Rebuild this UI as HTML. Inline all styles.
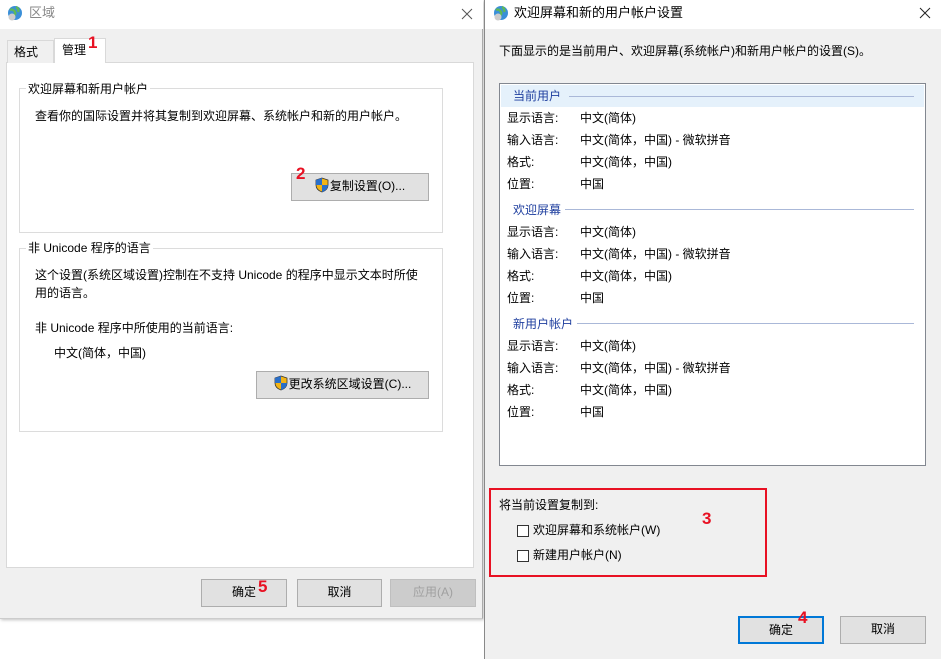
<!DOCTYPE html>
<html><head><meta charset="utf-8"><style>
*{margin:0;padding:0;box-sizing:border-box}
body{width:941px;height:659px;position:relative;overflow:hidden;background:#fff;font-family:"Liberation Sans","Noto Sans CJK SC",sans-serif;font-size:12px;color:#000}
.a{position:absolute;white-space:nowrap;line-height:14px}
.box{position:absolute}
.btn{position:absolute;background:#e1e1e1;border:1px solid #adadad;text-align:center;line-height:25px;font-size:12px}
.red{position:absolute;color:#e81123;font-weight:bold;font-size:17px;line-height:17px;font-family:"Liberation Sans",sans-serif}
.hdr{color:#1f3f9f}
.line{position:absolute;height:1px;background:#aab8d8}
.cb{position:absolute;width:12px;height:12px;border:1px solid #333;background:#fff}
.shield{display:inline-block;vertical-align:-3px;margin-right:1px}
</style></head><body>
<!-- left dialog -->
<div class="box" style="left:0;top:0;width:483px;height:619px;background:#f0f0f0;border-right:1px solid #aaa;border-bottom:1px solid #ccc;box-shadow:1px 1px 3px rgba(0,0,0,.25)"></div>
<div class="box" style="left:0;top:0;width:483px;height:29px;background:#fff"></div>
<svg class="box" style="left:7px;top:5px" width="16" height="16" viewBox="0 0 16 16"><circle cx="8" cy="8" r="7" fill="#3a8fd8"/><path d="M3 5c2-1 4 0 5 2s-1 4-3 4M9 2c2 1 3 3 2 5" stroke="#5db85a" stroke-width="2.5" fill="none"/><circle cx="5" cy="12" r="3.5" fill="#ccc"/></svg>
<div class="a" style="left:29px;top:6px;color:#888;font-size:13px">区域</div>
<svg class="box" style="left:461px;top:8px" width="12" height="12"><path d="M1 1L11 11M11 1L1 11" stroke="#555" stroke-width="1"/></svg>
<div class="box" style="left:6px;top:62px;width:468px;height:506px;background:#fff;border:1px solid #d9d9d9"></div>
<div class="box" style="left:7px;top:40px;width:47px;height:23px;background:#f0f0f0;border:1px solid #d9d9d9;border-bottom:none"></div>
<div class="a" style="left:14px;top:45px">格式</div>
<div class="box" style="left:54px;top:38px;width:52px;height:25px;background:#fff;border:1px solid #d9d9d9;border-bottom:none"></div>
<div class="a" style="left:62px;top:43px">管理</div>
<div class="red" style="left:88px;top:34px">1</div>
<div class="box" style="left:19px;top:88px;width:424px;height:145px;border:1px solid #dcdcdc"></div>
<div class="a" style="left:26px;top:82px;background:#fff;padding:0 2px">欢迎屏幕和新用户帐户</div>
<div class="a" style="left:35px;top:109px">查看你的国际设置并将其复制到欢迎屏幕、系统帐户和新的用户帐户。</div>
<div class="btn" style="left:291px;top:173px;width:138px;height:28px"><svg class="shield" width="14" height="16" viewBox="0 0 14 16"><path d="M7 1L1 3v5c0 4 3 6 6 7 3-1 6-3 6-7V3z" fill="#f2b416" stroke="#333" stroke-width=".8"/><path d="M7 1L1 3v5h6zM7 8v7c3-1 6-3 6-7z" fill="#2a6fc9"/></svg>复制设置(O)...</div>
<div class="red" style="left:296px;top:165px">2</div>
<div class="box" style="left:19px;top:248px;width:424px;height:184px;border:1px solid #dcdcdc"></div>
<div class="a" style="left:26px;top:241px;background:#fff;padding:0 2px">非 Unicode 程序的语言</div>
<div class="a" style="left:35px;top:268px">这个设置(系统区域设置)控制在不支持 Unicode 的程序中显示文本时所使</div>
<div class="a" style="left:35px;top:286px">用的语言。</div>
<div class="a" style="left:35px;top:321px">非 Unicode 程序中所使用的当前语言:</div>
<div class="a" style="left:54px;top:346px">中文(简体，中国)</div>
<div class="btn" style="left:256px;top:371px;width:173px;height:28px"><svg class="shield" width="14" height="16" viewBox="0 0 14 16"><path d="M7 1L1 3v5c0 4 3 6 6 7 3-1 6-3 6-7V3z" fill="#f2b416" stroke="#333" stroke-width=".8"/><path d="M7 1L1 3v5h6zM7 8v7c3-1 6-3 6-7z" fill="#2a6fc9"/></svg>更改系统区域设置(C)...</div>
<div class="btn" style="left:201px;top:579px;width:86px;height:28px">确定</div>
<div class="red" style="left:258px;top:578px">5</div>
<div class="btn" style="left:297px;top:579px;width:85px;height:28px">取消</div>
<div class="btn" style="left:390px;top:579px;width:86px;height:28px;background:#ccc;border-color:#bfbfbf;color:#a0a0a0">应用(A)</div>

<!-- right dialog -->
<div class="box" style="left:484px;top:0;width:457px;height:659px;background:#f0f0f0;border-left:1px solid #888"></div>
<div class="box" style="left:485px;top:0;width:456px;height:29px;background:#fff"></div>
<svg class="box" style="left:493px;top:5px" width="16" height="16" viewBox="0 0 16 16"><circle cx="8" cy="8" r="7" fill="#3a8fd8"/><path d="M3 5c2-1 4 0 5 2s-1 4-3 4M9 2c2 1 3 3 2 5" stroke="#5db85a" stroke-width="2.5" fill="none"/><circle cx="5" cy="12" r="3.5" fill="#ccc"/></svg>
<div class="a" style="left:514px;top:6px;font-size:13px">欢迎屏幕和新的用户帐户设置</div>
<svg class="box" style="left:919px;top:7px" width="12" height="12"><path d="M1 1L11 11M11 1L1 11" stroke="#222" stroke-width="1"/></svg>
<div class="a" style="left:499px;top:44px">下面显示的是当前用户、欢迎屏幕(系统帐户)和新用户帐户的设置(S)。</div>
<div class="box" style="left:499px;top:83px;width:427px;height:383px;background:#fff;border:1px solid #828790"></div>
<div class="box" style="left:501px;top:85px;width:423px;height:22px;background:#e5f1fb"></div>
<div class="a hdr" style="left:513px;top:89px">当前用户</div><div class="line" style="left:569px;top:96px;width:345px"></div>
<div class="a" style="left:507px;top:111px">显示语言:</div><div class="a" style="left:580px;top:111px">中文(简体)</div>
<div class="a" style="left:507px;top:133px">输入语言:</div><div class="a" style="left:580px;top:133px">中文(简体，中国) - 微软拼音</div>
<div class="a" style="left:507px;top:155px">格式:</div><div class="a" style="left:580px;top:155px">中文(简体，中国)</div>
<div class="a" style="left:507px;top:177px">位置:</div><div class="a" style="left:580px;top:177px">中国</div>
<div class="a hdr" style="left:513px;top:203px">欢迎屏幕</div><div class="line" style="left:565px;top:209px;width:349px"></div>
<div class="a" style="left:507px;top:225px">显示语言:</div><div class="a" style="left:580px;top:225px">中文(简体)</div>
<div class="a" style="left:507px;top:247px">输入语言:</div><div class="a" style="left:580px;top:247px">中文(简体，中国) - 微软拼音</div>
<div class="a" style="left:507px;top:269px">格式:</div><div class="a" style="left:580px;top:269px">中文(简体，中国)</div>
<div class="a" style="left:507px;top:291px">位置:</div><div class="a" style="left:580px;top:291px">中国</div>
<div class="a hdr" style="left:513px;top:317px">新用户帐户</div><div class="line" style="left:577px;top:323px;width:337px"></div>
<div class="a" style="left:507px;top:339px">显示语言:</div><div class="a" style="left:580px;top:339px">中文(简体)</div>
<div class="a" style="left:507px;top:361px">输入语言:</div><div class="a" style="left:580px;top:361px">中文(简体，中国) - 微软拼音</div>
<div class="a" style="left:507px;top:383px">格式:</div><div class="a" style="left:580px;top:383px">中文(简体，中国)</div>
<div class="a" style="left:507px;top:405px">位置:</div><div class="a" style="left:580px;top:405px">中国</div>
<div class="box" style="left:489px;top:488px;width:278px;height:89px;border:2px solid #e81123"></div>
<div class="a" style="left:499px;top:498px">将当前设置复制到:</div>
<div class="red" style="left:702px;top:510px">3</div>
<div class="cb" style="left:517px;top:525px"></div><div class="a" style="left:533px;top:523px">欢迎屏幕和系统帐户(W)</div>
<div class="cb" style="left:517px;top:550px"></div><div class="a" style="left:533px;top:548px">新建用户帐户(N)</div>
<div class="btn" style="left:738px;top:616px;width:86px;height:28px;border:2px solid #0078d7;line-height:24px">确定</div>
<div class="red" style="left:798px;top:609px">4</div>
<div class="btn" style="left:840px;top:616px;width:86px;height:28px">取消</div>
</body></html>
